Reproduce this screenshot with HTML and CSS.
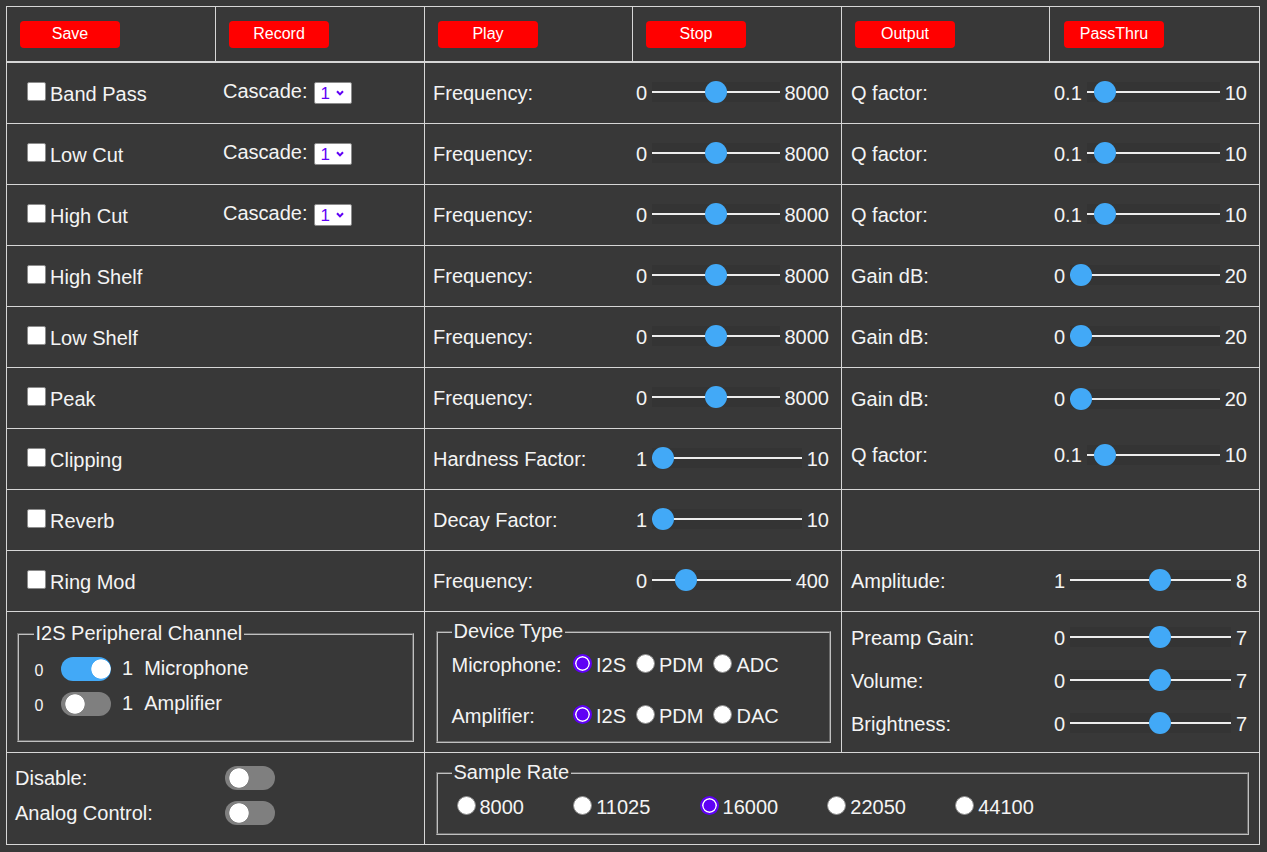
FILE: index.html
```html
<!DOCTYPE html>
<html lang="en">
<head>
<meta charset="utf-8">
<title>Audio Effects</title>
<link rel="stylesheet" href="styles.css">
</head>
<body>
<div class="page">
  <div class="topbar">
    <div class="tcell"><button class="btn">Save</button></div>
    <div class="tcell"><button class="btn">Record</button></div>
    <div class="tcell"><button class="btn">Play</button></div>
    <div class="tcell"><button class="btn">Stop</button></div>
    <div class="tcell"><button class="btn">Output</button></div>
    <div class="tcell"><button class="btn">PassThru</button></div>
  </div>

  <div class="grid">
    <!-- Band Pass -->
    <div class="cell fx">
      <label class="chk"><input type="checkbox"><span>Band Pass</span></label>
      <span class="casc">Cascade:<span class="sel"><select><option>1</option><option>2</option></select><svg viewBox="0 0 8 6" width="8" height="6"><path d="M1 1.2 L4 4.4 L7 1.2" fill="none" stroke="#5f00f5" stroke-width="2"/></svg></span></span>
    </div>
    <div class="cell ctl"><span class="lbl">Frequency:</span><span>0</span><input type="range" min="0" max="8000" value="4000"><span>8000</span></div>
    <div class="cell ctl rc"><span class="lbl">Q factor:</span><span>0.1</span><input type="range" min="0.1" max="10" step="0.1" value="0.7"><span>10</span></div>

    <!-- Low Cut -->
    <div class="cell fx">
      <label class="chk"><input type="checkbox"><span>Low Cut</span></label>
      <span class="casc">Cascade:<span class="sel"><select><option>1</option><option>2</option></select><svg viewBox="0 0 8 6" width="8" height="6"><path d="M1 1.2 L4 4.4 L7 1.2" fill="none" stroke="#5f00f5" stroke-width="2"/></svg></span></span>
    </div>
    <div class="cell ctl"><span class="lbl">Frequency:</span><span>0</span><input type="range" min="0" max="8000" value="4000"><span>8000</span></div>
    <div class="cell ctl rc"><span class="lbl">Q factor:</span><span>0.1</span><input type="range" min="0.1" max="10" step="0.1" value="0.7"><span>10</span></div>

    <!-- High Cut -->
    <div class="cell fx">
      <label class="chk"><input type="checkbox"><span>High Cut</span></label>
      <span class="casc">Cascade:<span class="sel"><select><option>1</option><option>2</option></select><svg viewBox="0 0 8 6" width="8" height="6"><path d="M1 1.2 L4 4.4 L7 1.2" fill="none" stroke="#5f00f5" stroke-width="2"/></svg></span></span>
    </div>
    <div class="cell ctl"><span class="lbl">Frequency:</span><span>0</span><input type="range" min="0" max="8000" value="4000"><span>8000</span></div>
    <div class="cell ctl rc"><span class="lbl">Q factor:</span><span>0.1</span><input type="range" min="0.1" max="10" step="0.1" value="0.7"><span>10</span></div>

    <!-- High Shelf -->
    <div class="cell fx"><label class="chk"><input type="checkbox"><span>High Shelf</span></label></div>
    <div class="cell ctl"><span class="lbl">Frequency:</span><span>0</span><input type="range" min="0" max="8000" value="4000"><span>8000</span></div>
    <div class="cell ctl rc"><span class="lbl">Gain dB:</span><span>0</span><input type="range" min="0" max="20" value="0"><span>20</span></div>

    <!-- Low Shelf -->
    <div class="cell fx"><label class="chk"><input type="checkbox"><span>Low Shelf</span></label></div>
    <div class="cell ctl"><span class="lbl">Frequency:</span><span>0</span><input type="range" min="0" max="8000" value="4000"><span>8000</span></div>
    <div class="cell ctl rc"><span class="lbl">Gain dB:</span><span>0</span><input type="range" min="0" max="20" value="0"><span>20</span></div>

    <!-- Peak -->
    <div class="cell fx"><label class="chk"><input type="checkbox"><span>Peak</span></label></div>
    <div class="cell ctl"><span class="lbl">Frequency:</span><span>0</span><input type="range" min="0" max="8000" value="4000"><span>8000</span></div>
    <div class="cell stack peak">
      <div class="srow"><span class="lbl">Gain dB:</span><span>0</span><input type="range" min="0" max="20" value="0"><span>20</span></div>
      <div class="srow"><span class="lbl">Q factor:</span><span>0.1</span><input type="range" min="0.1" max="10" step="0.1" value="0.7"><span>10</span></div>
    </div>

    <!-- Clipping -->
    <div class="cell fx"><label class="chk"><input type="checkbox"><span>Clipping</span></label></div>
    <div class="cell ctl"><span class="lbl">Hardness Factor:</span><span>1</span><input type="range" min="1" max="10" value="1"><span>10</span></div>

    <!-- Reverb -->
    <div class="cell fx"><label class="chk"><input type="checkbox"><span>Reverb</span></label></div>
    <div class="cell ctl"><span class="lbl">Decay Factor:</span><span>1</span><input type="range" min="1" max="10" value="1"><span>10</span></div>
    <div class="cell"></div>

    <!-- Ring Mod -->
    <div class="cell fx"><label class="chk"><input type="checkbox"><span>Ring Mod</span></label></div>
    <div class="cell ctl"><span class="lbl">Frequency:</span><span>0</span><input type="range" min="0" max="400" value="80"><span>400</span></div>
    <div class="cell ctl rc"><span class="lbl">Amplitude:</span><span>1</span><input type="range" min="1" max="8" value="5"><span>8</span></div>

    <!-- Fieldsets row -->
    <div class="cell fs">
      <fieldset class="i2s">
        <legend>I2S Peripheral Channel</legend>
        <div class="tgrow"><span class="z">0</span><input class="toggle" type="checkbox" checked><span class="one">1</span><span class="nm">Microphone</span></div>
        <div class="tgrow"><span class="z">0</span><input class="toggle" type="checkbox"><span class="one">1</span><span class="nm">Amplifier</span></div>
      </fieldset>
    </div>
    <div class="cell fs">
      <fieldset class="dev">
        <legend>Device Type</legend>
        <div class="dtrow">
          <span class="dtl">Microphone:</span>
          <label class="opt"><input class="rd" type="radio" name="mic" checked>I2S</label>
          <label class="opt"><input class="rd" type="radio" name="mic">PDM</label>
          <label class="opt"><input class="rd" type="radio" name="mic">ADC</label>
        </div>
        <div class="dtrow">
          <span class="dtl">Amplifier:</span>
          <label class="opt"><input class="rd" type="radio" name="amp" checked>I2S</label>
          <label class="opt"><input class="rd" type="radio" name="amp">PDM</label>
          <label class="opt"><input class="rd" type="radio" name="amp">DAC</label>
        </div>
      </fieldset>
    </div>
    <div class="cell stack lvl">
      <div class="srow"><span class="lbl">Preamp Gain:</span><span>0</span><input type="range" min="0" max="7" value="4"><span>7</span></div>
      <div class="srow"><span class="lbl">Volume:</span><span>0</span><input type="range" min="0" max="7" value="4"><span>7</span></div>
      <div class="srow"><span class="lbl">Brightness:</span><span>0</span><input type="range" min="0" max="7" value="4"><span>7</span></div>
    </div>

    <!-- Bottom row -->
    <div class="cell dis">
      <div class="drow"><span class="dl">Disable:</span><input class="toggle" type="checkbox"></div>
      <div class="drow"><span class="dl">Analog Control:</span><input class="toggle" type="checkbox"></div>
    </div>
    <div class="cell fs wide">
      <fieldset class="sr">
        <legend>Sample Rate</legend>
        <div class="srrow">
          <label class="opt gap"><input class="rd" type="radio" name="rate">8000</label>
          <label class="opt gap"><input class="rd" type="radio" name="rate">11025</label>
          <label class="opt gap"><input class="rd" type="radio" name="rate" checked>16000</label>
          <label class="opt gap"><input class="rd" type="radio" name="rate">22050</label>
          <label class="opt gap"><input class="rd" type="radio" name="rate">44100</label>
        </div>
      </fieldset>
    </div>
  </div>
</div>
</body>
</html>
```

FILE: styles.css
```css
* { box-sizing: border-box; }

html, body { margin: 0; }

body {
  background: #383838;
  color: #f4f4f4;
  font-family: "Liberation Sans", Arial, sans-serif;
  font-size: 20px;
  padding: 6px 7px 0 6px;
}

.page { width: 1254px; }

/* ---------- top button bar ---------- */
.topbar {
  display: grid;
  grid-template-columns: 209px 209px 208px 209px 208px 210px;
  height: 56px;
  border: 1px solid #d6d6d6;
}

.tcell {
  display: flex;
  align-items: center;
  padding-left: 13px;
  border-right: 1px solid #d6d6d6;
}
.tcell:last-child { border-right: none; padding-left: 14px; }

.btn {
  width: 100px;
  height: 27px;
  border: none;
  border-radius: 4px;
  background: #ff0000;
  color: #fff;
  font-family: "Liberation Sans", Arial, sans-serif;
  font-size: 16px;
  padding: 0;
}

/* ---------- main grid ---------- */
.grid {
  display: grid;
  grid-template-columns: 418px 417px 418px;
  grid-template-rows: repeat(9, 61px) 141px 92px;
  border-left: 1px solid #d6d6d6;
  border-top: 1px solid #d6d6d6;
}

.cell {
  display: flex;
  align-items: center;
  min-width: 0;
  border-right: 1px solid #d6d6d6;
  border-bottom: 1px solid #d6d6d6;
}

/* left column: checkbox + cascade */
.fx { padding-left: 16px; }

.chk {
  flex: none;
  width: 200px;
  display: flex;
  align-items: flex-start;
}
.chk input {
  -webkit-appearance: none;
  appearance: none;
  width: 19px;
  height: 19px;
  margin: 2px 4px 0 4px;
  background: #fff;
  border: 1px solid #8c8c8c;
  border-radius: 2px;
}
.chk span { padding-top: 3px; line-height: 23px; }

.casc {
  display: flex;
  align-items: center;
  margin-top: -3px;
  line-height: 23px;
}

.sel {
  position: relative;
  display: inline-block;
  margin-left: 6px;
  margin-top: 3px;
  height: 22px;
}
.sel select {
  -webkit-appearance: none;
  appearance: none;
  display: block;
  width: 38px;
  height: 22px;
  margin: 0;
  padding: 0 0 0 6px;
  background: #fff;
  border: 1px solid #8c8c8c;
  border-radius: 2px;
  color: #5f00f5;
  font-family: "Liberation Sans", Arial, sans-serif;
  font-size: 17px;
}
.sel svg {
  position: absolute;
  left: 22px;
  top: 8px;
  pointer-events: none;
}

/* slider rows */
.ctl { gap: 5px; padding: 0 12px 0 8px; }
.rc { padding-left: 9px; }

.lbl { flex: none; width: 198px; white-space: nowrap; }

.stack {
  flex-direction: column;
  align-items: stretch;
  justify-content: center;
  padding: 0 12px 2px 9px;
}
.peak { grid-row: span 2; gap: 33px; }
.lvl { gap: 20px; }

.srow {
  display: flex;
  align-items: center;
  gap: 5px;
  height: 23px;
}

input[type="range"] {
  -webkit-appearance: none;
  appearance: none;
  flex: 1;
  min-width: 0;
  height: 20px;
  margin: 0 0 2px;
  background: #343434;
}
input[type="range"]::-webkit-slider-runnable-track {
  height: 20px;
  background: linear-gradient(to bottom, transparent 9px, #ececec 9px, #ececec 11px, transparent 11px);
}
input[type="range"]::-webkit-slider-thumb {
  -webkit-appearance: none;
  appearance: none;
  width: 22px;
  height: 22px;
  margin-top: -1px;
  border: none;
  border-radius: 50%;
  background: #42a9f7;
}

/* fieldsets */
.fs { align-items: stretch; }

fieldset {
  flex: 1;
  min-width: 0;
  border: 2px groove #c0c0c0;
}
legend { padding: 0 2px; line-height: 23px; }

.i2s { margin: 10px; padding: 6px 13.5px 0 14.5px; }

.tgrow {
  display: flex;
  align-items: center;
  height: 35px;
}
.z { width: 27.5px; font-size: 16px; margin-top: 4px; padding-left: 1px; }
.one { margin-left: 11px; }
.nm { margin-left: 11px; }

.toggle {
  -webkit-appearance: none;
  appearance: none;
  flex: none;
  width: 50px;
  height: 24px;
  margin: 0;
  border: none;
  border-radius: 12px;
  background: radial-gradient(circle 10px at 14px 12px, #fff 9.3px, rgba(255, 255, 255, 0) 10px) #7f7f7f;
}
.toggle:checked {
  background: radial-gradient(circle 10px at 40px 12px, #fff 9.3px, rgba(255, 255, 255, 0) 10px) #42a9f7;
}

.dev { margin: 8px 10px 9px 11px; padding: 10.5px 13.5px 0; }

.dtrow {
  display: flex;
  align-items: center;
  height: 23px;
}
.dtrow + .dtrow { margin-top: 28.5px; }
.dtl { flex: none; width: 116.5px; }

.opt {
  display: flex;
  align-items: center;
  margin-right: 5px;
}
.opt.gap { margin-right: 44.2px; }

.rd {
  -webkit-appearance: none;
  appearance: none;
  flex: none;
  width: 19px;
  height: 19px;
  margin: 0 4px 4px 5px;
  border-radius: 50%;
  background: #fff;
  border: 1px solid #8c8c8c;
}
.rd:checked {
  background: #5f00f5;
  border: 2px solid #5f00f5;
  box-shadow: inset 0 0 0 1.5px #fff;
}

/* bottom row */
.dis {
  flex-direction: column;
  align-items: stretch;
  justify-content: flex-start;
  padding: 7.5px 0 0 8px;
}
.drow {
  display: flex;
  align-items: center;
  height: 35px;
}
.dl { flex: none; width: 210px; }

.wide { grid-column: span 2; }
.sr { margin: 8px 10px 9px 11px; padding: 11.5px 13.5px 0; }

.srrow {
  display: flex;
  align-items: center;
  height: 23px;
}
```
